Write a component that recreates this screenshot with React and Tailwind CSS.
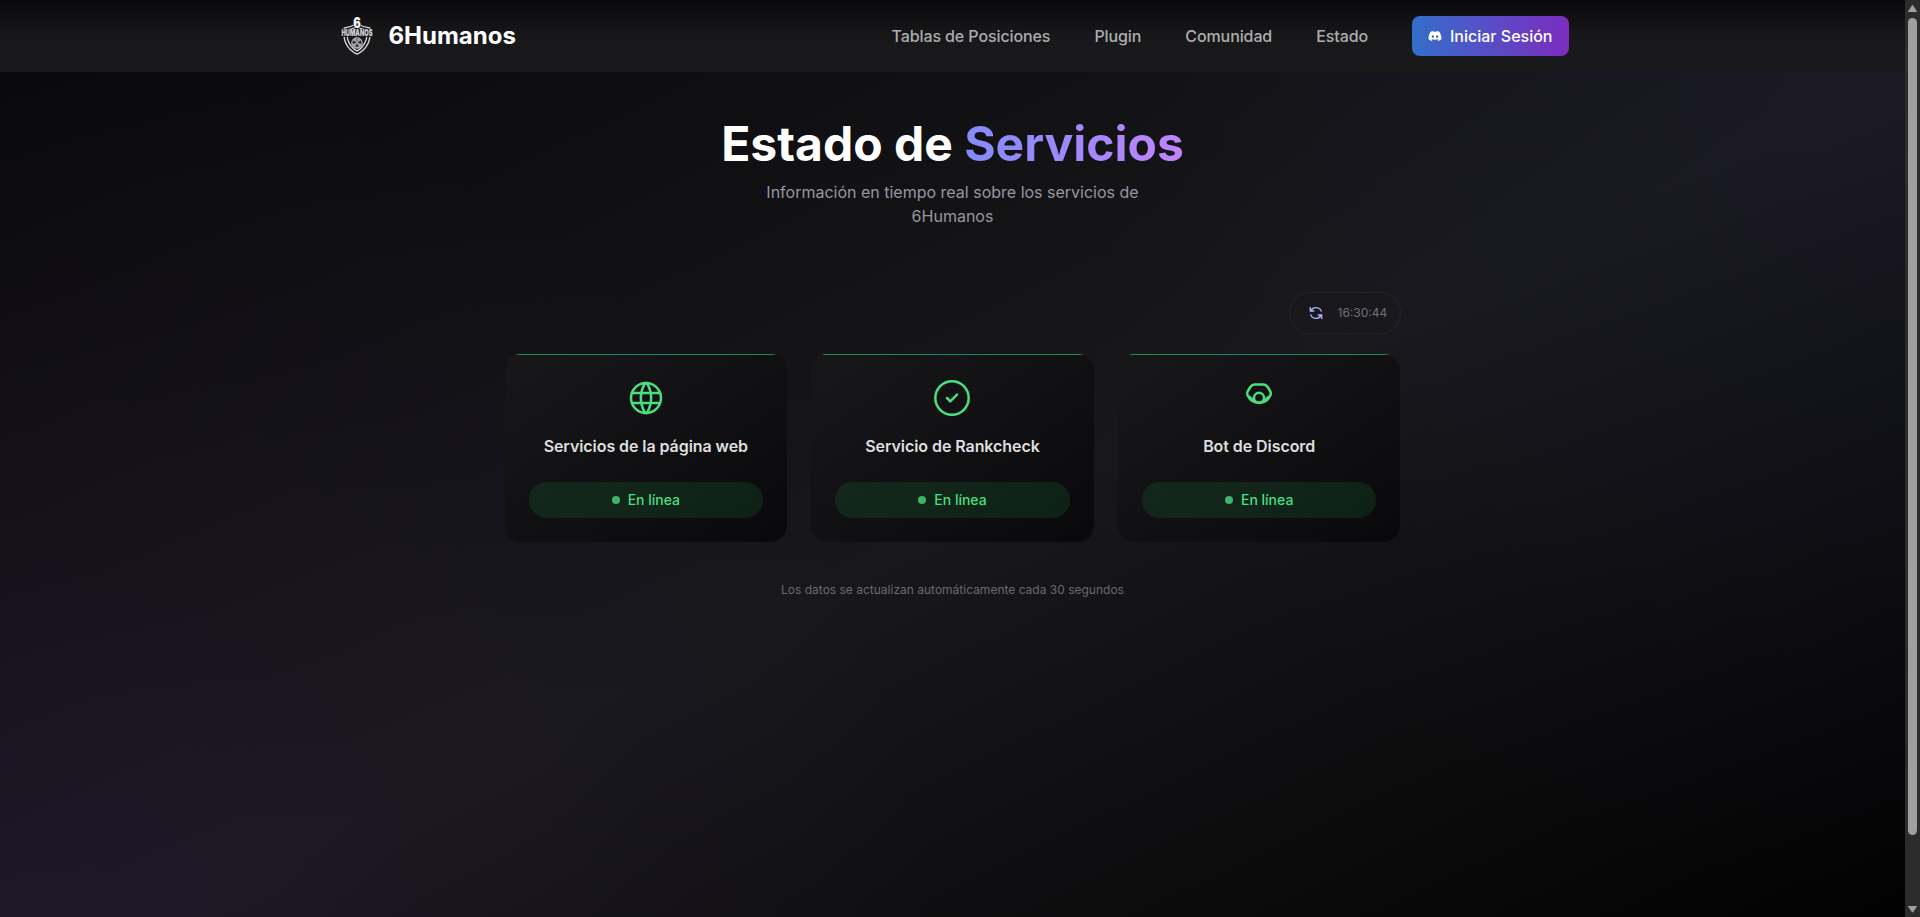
import React from "react";
import { FaDiscord } from "react-icons/fa";

function Logo() {
  return (
    <svg viewBox="0 0 40 40" className="size-10 shrink-0 overflow-visible" fill="none">
      <path d="M7.200 12C12 11.500 16 9.800 20 7.500c4 2.300 8 4 12.800 4.500 1.500 11-1.200 20.500-12.800 26.200C8.400 32.500 5.700 23 7.200 12Z" fill="#18181b" stroke="#d4d4d8" strokeWidth="1.3" />
      <path d="M10 14c3.700-.3 7-1.400 10-3.200 3 1.800 6.300 2.900 10 3.200.7 9.300-1.700 16.200-10 21.100C11.700 30.200 9.300 23.300 10 14Z" stroke="#e4e4e7" strokeWidth="1.2" />
      <circle cx="20" cy="27" r="5.400" fill="#a1a1aa" stroke="#d4d4d8" strokeWidth=".6" />
      <path d="m16 25 3 1.300-3 1.200zM24 25l-3 1.300 3 1.200zM20 28.300l1.400 2h-2.800zM20 22v3" fill="#27272a" stroke="#27272a" strokeWidth=".7" />
      <rect x="4.300" y="12.900" width="31.400" height="8" fill="#1a1a1c" />
      <text x="20" y="20.300" textAnchor="middle" textLength="31" lengthAdjust="spacingAndGlyphs" fontFamily="Inter, sans-serif" fontWeight="900" fontSize="9.500" fill="#d0d0d4">HUMANOS</text>
      <text x="20" y="11.700" textAnchor="middle" textLength="7.500" lengthAdjust="spacingAndGlyphs" fontFamily="Inter, sans-serif" fontWeight="900" fontSize="14" fill="#fafafa" stroke="#111113" strokeWidth="1.200" paintOrder="stroke">6</text>
    </svg>
  );
}

function StatusIcon({ children }) {
  return (
    <svg viewBox="0 0 24 24" className="size-10 text-[#4ade80]" fill="none" stroke="currentColor" strokeWidth="1.5" strokeLinecap="round" strokeLinejoin="round">
      {children}
    </svg>
  );
}

const services = [
  {
    name: "Servicios de la página web",
    icon: (
      <>
        <circle cx="12" cy="12" r="9" />
        <path d="M11.500 3a17 17 0 0 0 0 18M12.500 3a17 17 0 0 1 0 18M3.600 9h16.800M3.600 15h16.800" />
      </>
    ),
  },
  {
    name: "Servicio de Rankcheck",
    icon: (
      <>
        <circle cx="12" cy="12" r="10" />
        <path d="m9 12 2 2 4-4" />
      </>
    ),
  },
  {
    name: "Bot de Discord",
    icon: (
      <>
        <path d="M9.300 3.900h5.400c1.200 0 1.800.5 2.500 1.500l1.500 2.500c.5.900.5 1.700.1 2.600-1.200 2.500-3.500 4.400-6.800 4.400s-5.600-1.900-6.800-4.400c-.4-.9-.4-1.700.1-2.600l1.500-2.500c.7-1 1.300-1.500 2.500-1.500Z" />
        <circle cx="12" cy="11.900" r="3" />
        <path d="M6.100 11.300l2.500 2M17.900 11.300l-2.500 2" />
      </>
    ),
  },
];

function ServiceCard({ name, icon }) {
  return (
    <article className="relative flex flex-col items-center overflow-hidden rounded-2xl bg-[linear-gradient(to_bottom_right,#18181a,#09090b)] p-6">
      <div className="absolute inset-x-0 top-0 h-px bg-[linear-gradient(to_right,#22c55e,#10b981,#22c55e)] opacity-70" />
      <StatusIcon>{icon}</StatusIcon>
      <h2 className="mt-4 text-base font-semibold tracking-[-0.07px] text-[#dededf]">{name}</h2>
      <div className="mt-6 flex h-9 w-full items-center justify-center gap-2 rounded-full bg-[#22c55e]/12 text-sm font-medium text-[#4ade80]">
        <span className="size-2 rounded-full bg-[#40b26a]" />
        En línea
      </div>
    </article>
  );
}

function Scrollbar() {
  return (
    <div className="flex h-[917px] w-[15px] shrink-0 flex-col items-center justify-between bg-[#2c2c2c]">
      <svg viewBox="0 0 9 12" className="h-3 w-[9px]"><path d="M4.500 5.300 8.500 11.500H.5Z" fill="#9f9f9f" stroke="#9f9f9f" strokeLinejoin="round" /></svg>
      <div className="mt-[6px] h-[817px] w-[9px] rounded-full bg-[#9f9f9f]" />
      <div className="grow" />
      <svg viewBox="0 0 9 12" className="h-3 w-[9px]"><path d="M4.500 7.200 8.500 1.500H.5Z" fill="#9f9f9f" stroke="#9f9f9f" strokeLinejoin="round" /></svg>
    </div>
  );
}

export default function App() {
  return (
    <div className="flex h-[917px] w-[1920px] overflow-hidden bg-black font-['Inter',sans-serif]">
      <div className="h-[917px] w-[1905px] overflow-hidden">
        <header className="h-[72px] bg-[linear-gradient(to_bottom,#09090b,#18181a_50%,#19191b)]">
          <div className="mx-auto flex h-full max-w-7xl items-center justify-between px-6">
            <a className="flex items-center gap-3">
              <Logo />
              <span className="text-2xl font-bold text-white">6Humanos</span>
            </a>
            <nav className="flex items-center gap-11 text-base font-medium text-[#adadae]">
              <a className="tracking-[-0.1px]">Tablas de Posiciones</a>
              <a className="tracking-[-0.1px]">Plugin</a>
              <a className="tracking-[-0.1px]">Comunidad</a>
              <a className="tracking-[-0.1px]">Estado</a>
              <button className="flex h-10 items-center gap-2 rounded-lg bg-[linear-gradient(to_right,#346ecb,#7c2cbf)] px-4 text-white">
                <FaDiscord className="size-3.5" />
                Iniciar Sesión
              </button>
            </nav>
          </div>
        </header>
        <div className="h-[917px] bg-[linear-gradient(to_bottom_right,#09090b,#18181b,#000000)]">
          <main className="h-full bg-[radial-gradient(circle_at_top_right,rgba(79,70,229,0.055),transparent_40%),radial-gradient(circle_at_bottom_left,rgba(126,34,206,0.08),transparent_45%)] pt-12">
            <div className="text-center">
              <h1 className="text-5xl font-bold text-white">
                Estado de <span className="bg-[linear-gradient(to_right,#818cf8,#c084fc)] bg-clip-text text-transparent">Servicios</span>
              </h1>
              <p className="mx-auto mt-3 max-w-md text-base text-[#97979f]">
                Información en tiempo real sobre los servicios de 6Humanos
              </p>
            </div>
            <section className="mx-auto mt-16 w-[896px]">
              <div className="flex justify-end">
                <div className="flex h-[42px] w-28 items-center gap-3.5 rounded-full border border-white/5 bg-zinc-900/50 pl-[18px]">
                  <svg viewBox="0 0 24 24" className="size-4 text-[#a5b4fc]" fill="none" stroke="currentColor" strokeWidth="2.1">
                    <path d="M3.500 3v6h6M4.500 8.500a8.500 8.500 0 0 1 15.700 1.500M20.500 21v-6h-6M19.500 15.500A8.500 8.500 0 0 1 3.800 14" />
                  </svg>
                  <time className="text-xs text-[#71717a]">16:30:44</time>
                </div>
              </div>
              <div className="mt-5 grid grid-cols-3 gap-6">
                {services.map((service) => (
                  <ServiceCard key={service.name} {...service} />
                ))}
              </div>
              <p className="mt-10 text-center text-xs text-[#696971]">
                Los datos se actualizan automáticamente cada 30 segundos
              </p>
            </section>
          </main>
        </div>
      </div>
      <Scrollbar />
    </div>
  );
}
